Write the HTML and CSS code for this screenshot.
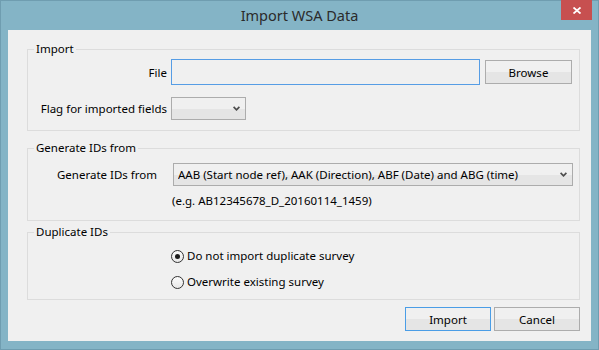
FILE: index.html
```html
<!DOCTYPE html>
<html lang="en">

<head>
    <meta charset="UTF-8">
    <meta name="viewport" content="width=device-width, initial-scale=1.0">
    <title>Import WSA Data</title>
    <link rel="stylesheet" href="styles.css">
</head>

<body>
    <div class="window">
        <!-- Title bar -->
        <div class="titlebar">
            <span></span>
            <span class="title">Import WSA Data</span>
            <button class="close-btn" aria-label="Close">
                <svg width="8" height="7" viewBox="0 0 8 7">
                    <path d="M0.5 0.5 L7.5 6.5 M7.5 0.5 L0.5 6.5" stroke="#fff" stroke-width="1.8" fill="none" />
                </svg>
            </button>
        </div>

        <div class="client">
            <!-- Import group -->
            <fieldset class="group group-import">
                <legend>Import</legend>
                <div class="import-grid">
                    <label class="field-label">File</label>
                    <div class="file-row">
                        <input class="text-input" type="text">
                        <button class="btn browse-btn">Browse</button>
                    </div>
                    <label class="field-label">Flag for imported fields</label>
                    <div>
                        <div class="combo combo-small">
                            <span class="combo-text"></span>
                            <svg class="chevron" width="7" height="5" viewBox="0 0 7 5">
                                <path d="M0.6 0.8 L3.5 3.8 L6.4 0.8" stroke="#4d4d4d" stroke-width="1.7" fill="none" />
                            </svg>
                        </div>
                    </div>
                </div>
            </fieldset>

            <!-- Generate IDs group -->
            <fieldset class="group group-generate">
                <legend>Generate IDs from</legend>
                <div class="generate-row">
                    <label class="generate-label">Generate IDs from</label>
                    <div class="combo combo-wide">
                        <span class="combo-text">AAB (Start node ref), AAK (Direction), ABF (Date) and ABG (time)</span>
                        <svg class="chevron" width="7" height="5" viewBox="0 0 7 5">
                            <path d="M0.6 0.8 L3.5 3.8 L6.4 0.8" stroke="#4d4d4d" stroke-width="1.7" fill="none" />
                        </svg>
                    </div>
                </div>
                <p class="example">(e.g. AB12345678_D_20160114_1459)</p>
            </fieldset>

            <!-- Duplicate IDs group -->
            <fieldset class="group group-duplicate">
                <legend>Duplicate IDs</legend>
                <div class="radio-list">
                    <label class="radio-row">
                        <span class="radio checked"></span>
                        Do not import duplicate survey
                    </label>
                    <label class="radio-row">
                        <span class="radio"></span>
                        Overwrite existing survey
                    </label>
                </div>
            </fieldset>

            <div class="actions">
                <button class="btn action-btn default-btn">Import</button>
                <button class="btn action-btn">Cancel</button>
            </div>
        </div>
    </div>
</body>

</html>
```

FILE: styles.css
```css
/* Page */
body {
    margin: 0;
    font-family: "Noto Sans", "DejaVu Sans", sans-serif;
    font-size: 11.5px;
    color: #000;
}

/* Window frame */
.window {
    width: 599px;
    height: 350px;
    box-sizing: border-box;
    border: 1px solid #6f9db0;
    background-color: #84b4c6;
    display: flex;
    flex-direction: column;
}

/* Title bar */
.titlebar {
    height: 29px;
    display: grid;
    grid-template-columns: 1fr auto 1fr;
    flex-shrink: 0;
}

.title {
    font-size: 14.5px;
    line-height: 29px;
    color: #2b2b2b;
}

.close-btn {
    justify-self: end;
    align-self: start;
    width: 31px;
    height: 20px;
    margin-right: 6px;
    margin-top: -1px;
    border: none;
    padding: 0;
    background-color: #c75050;
    display: flex;
    align-items: center;
    justify-content: center;
}

/* Client area */
.client {
    flex: 1;
    margin: 0 7px 8px 7px;
    background-color: #f0f0f0;
    padding: 11px 11px 0 19px;
}

/* Group boxes */
.group {
    margin: 0;
    padding: 0;
    border: 1px solid #dcdcdc;
    min-width: 0;
}

.group legend {
    margin-left: 6px;
    padding: 0 2px;
    line-height: 16px;
}

.group-generate {
    margin-top: 9px;
}

.group-duplicate {
    margin-top: 3px;
}

/* Import group */
.import-grid {
    display: grid;
    grid-template-columns: 139px auto;
    column-gap: 4px;
    row-gap: 12px;
    align-items: center;
    padding: 2px 0 10px 0;
}

.field-label {
    text-align: right;
}

.file-row {
    display: flex;
    align-items: center;
    gap: 5px;
}

.text-input {
    width: 309px;
    height: 26px;
    box-sizing: border-box;
    border: 1px solid #569de5;
    background-color: #f0f0f0;
    margin: 0;
    font: inherit;
}

/* Buttons */
.btn {
    box-sizing: border-box;
    height: 24px;
    border: 1px solid #acacac;
    background: linear-gradient(#f0f0f0 50%, #e5e5e5 50%);
    font: inherit;
    color: #000;
    padding: 0;
    margin: 0;
}

.browse-btn {
    width: 87px;
}

/* Combo boxes */
.combo {
    box-sizing: border-box;
    height: 23px;
    border: 1px solid #acacac;
    background: linear-gradient(#f0f0f0 50%, #e5e5e5 50%);
    display: flex;
    align-items: center;
    padding: 0 5px 0 4px;
}

.combo-text {
    flex: 1;
    white-space: nowrap;
    overflow: hidden;
}

.combo-small {
    width: 75px;
}

.combo-wide {
    width: 400px;
}

/* Generate IDs group */
.generate-row {
    display: flex;
    align-items: center;
    gap: 16px;
    padding-top: 7px;
}

.generate-label {
    width: 129px;
    text-align: right;
}

.example {
    margin: 7px 0 11px 144px;
    line-height: 16px;
}

/* Duplicate IDs group */
.radio-list {
    display: flex;
    flex-direction: column;
    gap: 10px;
    padding: 8px 0 9px 143px;
}

.radio-row {
    display: flex;
    align-items: center;
    gap: 3px;
    line-height: 16px;
}

.radio {
    width: 13px;
    height: 13px;
    box-sizing: border-box;
    border: 1px solid #333;
    border-radius: 50%;
    background: linear-gradient(#fcfcfc, #e8e8e8);
    display: flex;
    align-items: center;
    justify-content: center;
}

.radio.checked::after {
    content: "";
    width: 5px;
    height: 5px;
    border-radius: 50%;
    background-color: #1c1c1c;
}

/* Dialog buttons */
.actions {
    display: flex;
    justify-content: flex-end;
    gap: 3px;
    margin-top: 7px;
}

.action-btn {
    width: 86px;
}

.default-btn {
    border-color: #4a9de6;
}
```
